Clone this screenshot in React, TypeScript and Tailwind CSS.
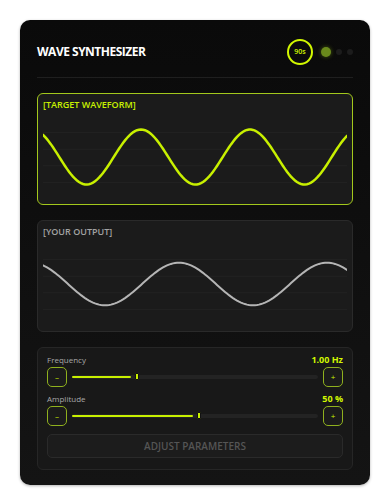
import React from 'react';

function wavePath(w: number, c: number, amp: number, trough: number, period: number) {
  const pts: string[] = [];
  for (let x = 0; x <= w; x += 2) {
    const y = c + amp * Math.cos((2 * Math.PI * (x - trough)) / period);
    pts.push(`${x === 0 ? 'M' : 'L'}${x.toFixed(1)},${y.toFixed(2)}`);
  }
  return pts.join(' ');
}

function Scope({ label, target }: { label: string; target?: boolean }) {
  const d = target ? wavePath(304, 41, 27.5, 43.5, 109) : wavePath(304, 41, 21.3, 62, 148);
  return (
    <div
      className={`h-[112px] rounded-[6px] border bg-[#1b1b1b] px-[5px] pt-[5px] ${
        target ? 'border-[#a3c81c]' : 'border-[#2a2a2a]'
      }`}
    >
      <div
        className={`text-[9px] leading-[12px] font-semibold ${target ? 'text-[#c8f000]' : 'text-[#a3a3a3]'}`}
      >
        {label}
      </div>
      <svg width="304" height="83" viewBox="0 0 304 83" className="mt-[5px] block">
        {[16.6, 33.2, 49.8, 66.4].map((y) => (
          <line key={y} x1="0" x2="304" y1={y} y2={y} stroke="#232323" strokeWidth="1" />
        ))}
        <path
          d={d}
          fill="none"
          stroke={target ? '#c8f000' : '#b5b5b5'}
          strokeWidth={target ? 2.5 : 2}
          strokeLinecap="round"
        />
      </svg>
    </div>
  );
}

function Slider({ label, value, pct }: { label: string; value: string; pct: number }) {
  return (
    <div>
      <div className="flex items-end justify-between">
        <span className="text-[8px] leading-[10px] text-[#a8a8a8]">{label}</span>
        <span className="text-[9px] leading-[11px] font-bold text-[#d2f800]">{value}</span>
      </div>
      <div className="mt-[2px] flex items-center gap-[5px]">
        <button className="flex h-[20px] w-[20px] items-center justify-center rounded-[5px] border border-[#8fb01e] bg-[#1b1b1b] text-[8px] leading-none text-[#c8f000]">
          –
        </button>
        <div className="relative h-[4px] flex-1 rounded-full bg-[#232323]">
          <div className="absolute left-0 top-[1px] h-[2px] rounded-full bg-[#c8f000]" style={{ width: `${pct}%` }} />
          <div
            className="absolute top-[-2px] h-[7px] w-[4px] rounded-[1px] border border-[#111] bg-[#c8f000]"
            style={{ left: `calc(${pct}% + 4px)` }}
          />
        </div>
        <button className="flex h-[20px] w-[20px] items-center justify-center rounded-[5px] border border-[#8fb01e] bg-[#1b1b1b] text-[8px] leading-none text-[#c8f000]">
          +
        </button>
      </div>
    </div>
  );
}

export default function App() {
  return (
    <div className="min-h-[500px] bg-white pt-[20px] pl-[20px]" style={{ fontFamily: '"Open Sans", "Noto Sans", sans-serif' }}>
      <div className="w-[350px] h-[465px] rounded-[10px] bg-gradient-to-b from-[#0a0a0a] to-[#141414] p-[17px] shadow-[0_1px_3px_rgba(0,0,0,0.3)]">
        <div className="flex h-[30px] items-center justify-between">
          <h1 className="text-[12px] font-bold tracking-[-0.5px] text-white">WAVE SYNTHESIZER</h1>
          <div className="flex items-center">
            <div className="flex h-[26px] w-[26px] items-center justify-center rounded-full border-2 border-[#d2f800] text-[7px] font-semibold text-[#d2f800]">
              90s
            </div>
            <div className="ml-[8px] h-[10px] w-[10px] rounded-full bg-[#6a8a1c] shadow-[0_0_4px_rgba(160,210,20,0.4)]" />
            <div className="ml-[5px] h-[6px] w-[6px] rounded-full bg-[#1c1c1c]" />
            <div className="ml-[5px] h-[6px] w-[6px] rounded-full bg-[#1c1c1c]" />
          </div>
        </div>
        <div className="mt-[10px] border-b border-[#1f1f1f]" />
        <div className="mt-[15px] flex flex-col gap-[15px]">
          <Scope label="[TARGET WAVEFORM]" target />
          <Scope label="[YOUR OUTPUT]" />
          <div className="h-[123px] rounded-[6px] border border-[#262626] bg-[#181818] px-[9px] pt-[6px]">
            <Slider label="Frequency" value="1.00 Hz" pct={24} />
            <div className="mt-[6px]">
              <Slider label="Amplitude" value="50 %" pct={49} />
            </div>
            <button className="mt-[8px] flex h-[24px] w-full items-center justify-center rounded-[5px] border border-[#2a2a2a] bg-[#1c1c1c] text-[10px] font-semibold text-[#555]">
              ADJUST PARAMETERS
            </button>
          </div>
        </div>
      </div>
    </div>
  );
}
